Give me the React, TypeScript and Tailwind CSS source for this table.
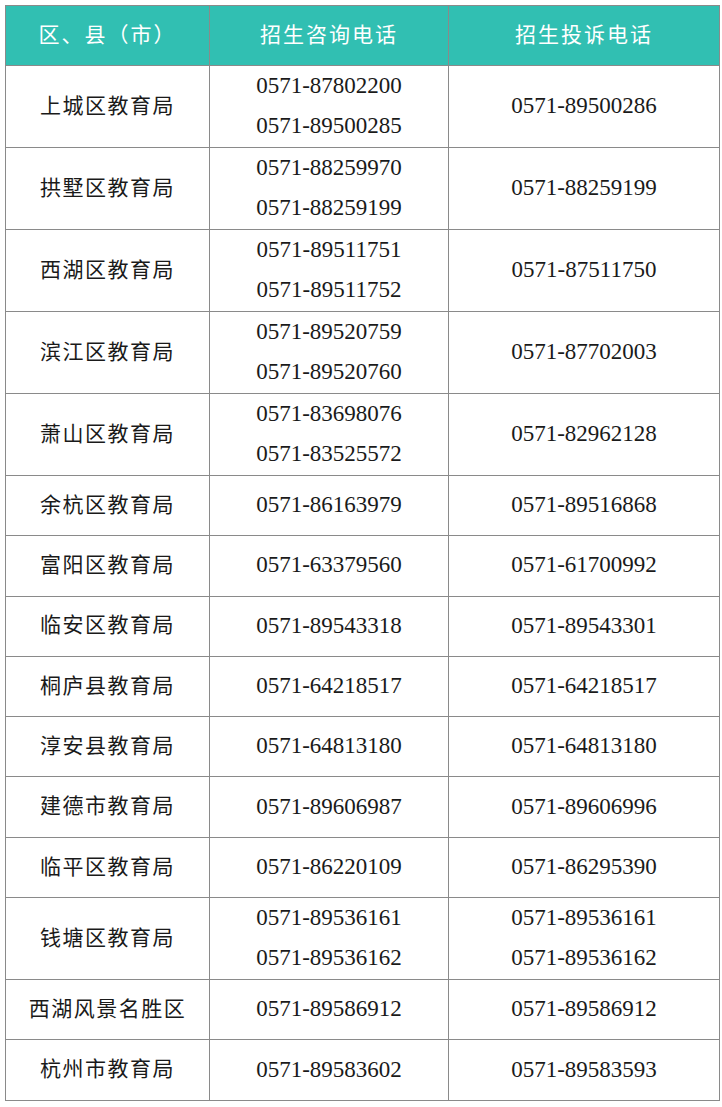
const rows: { name: string; consult: string[]; complaint: string[] }[] = [
  { name: "上城区教育局", consult: ["0571-87802200", "0571-89500285"], complaint: ["0571-89500286"] },
  { name: "拱墅区教育局", consult: ["0571-88259970", "0571-88259199"], complaint: ["0571-88259199"] },
  { name: "西湖区教育局", consult: ["0571-89511751", "0571-89511752"], complaint: ["0571-87511750"] },
  { name: "滨江区教育局", consult: ["0571-89520759", "0571-89520760"], complaint: ["0571-87702003"] },
  { name: "萧山区教育局", consult: ["0571-83698076", "0571-83525572"], complaint: ["0571-82962128"] },
  { name: "余杭区教育局", consult: ["0571-86163979"], complaint: ["0571-89516868"] },
  { name: "富阳区教育局", consult: ["0571-63379560"], complaint: ["0571-61700992"] },
  { name: "临安区教育局", consult: ["0571-89543318"], complaint: ["0571-89543301"] },
  { name: "桐庐县教育局", consult: ["0571-64218517"], complaint: ["0571-64218517"] },
  { name: "淳安县教育局", consult: ["0571-64813180"], complaint: ["0571-64813180"] },
  { name: "建德市教育局", consult: ["0571-89606987"], complaint: ["0571-89606996"] },
  { name: "临平区教育局", consult: ["0571-86220109"], complaint: ["0571-86295390"] },
  { name: "钱塘区教育局", consult: ["0571-89536161", "0571-89536162"], complaint: ["0571-89536161", "0571-89536162"] },
  { name: "西湖风景名胜区", consult: ["0571-89586912"], complaint: ["0571-89586912"] },
  { name: "杭州市教育局", consult: ["0571-89583602"], complaint: ["0571-89583593"] },
];

const cjk = "font-['Noto_Sans_CJK_SC',sans-serif]";
const num = "font-['Liberation_Serif','Noto_Sans_CJK_SC',serif]";

function Phones({ list }: { list: string[] }) {
  return (
    <div className={`flex flex-col items-center gap-[14px] text-[23px] leading-[26px] text-[#1a1a1a] ${num}`}>
      {list.map((p) => (
        <span key={p}>{p}</span>
      ))}
    </div>
  );
}

export default function App() {
  return (
    <div className="bg-white p-[5px] w-[722px]">
      <table className="border-collapse table-fixed w-[714px]">
        <colgroup>
          <col className="w-[204px]" />
          <col className="w-[239px]" />
          <col className="w-[271px]" />
        </colgroup>
        <thead>
          <tr className="h-[60px] bg-[#31bfb2]">
            {["区、县（市）", "招生咨询电话", "招生投诉电话"].map((h) => (
              <th
                key={h}
                className={`border border-[#8a8a8a] pb-[3px] text-center font-normal text-white text-[21px] tracking-[2px] ${cjk}`}
              >
                {h}
              </th>
            ))}
          </tr>
        </thead>
        <tbody>
          {rows.map((r) => {
            const tall = r.consult.length > 1 || r.complaint.length > 1;
            return (
              <tr key={r.name} className={tall ? "h-[82px]" : "h-[60.3px]"}>
                <td className={`border border-[#8a8a8a] pb-[4px] text-center text-[21px] tracking-[1.5px] text-[#1a1a1a] ${cjk}`}>
                  {r.name}
                </td>
                <td className="border border-[#8a8a8a] pb-[1px] text-center">
                  <Phones list={r.consult} />
                </td>
                <td className="border border-[#8a8a8a] pb-[1px] text-center">
                  <Phones list={r.complaint} />
                </td>
              </tr>
            );
          })}
        </tbody>
      </table>
    </div>
  );
}
